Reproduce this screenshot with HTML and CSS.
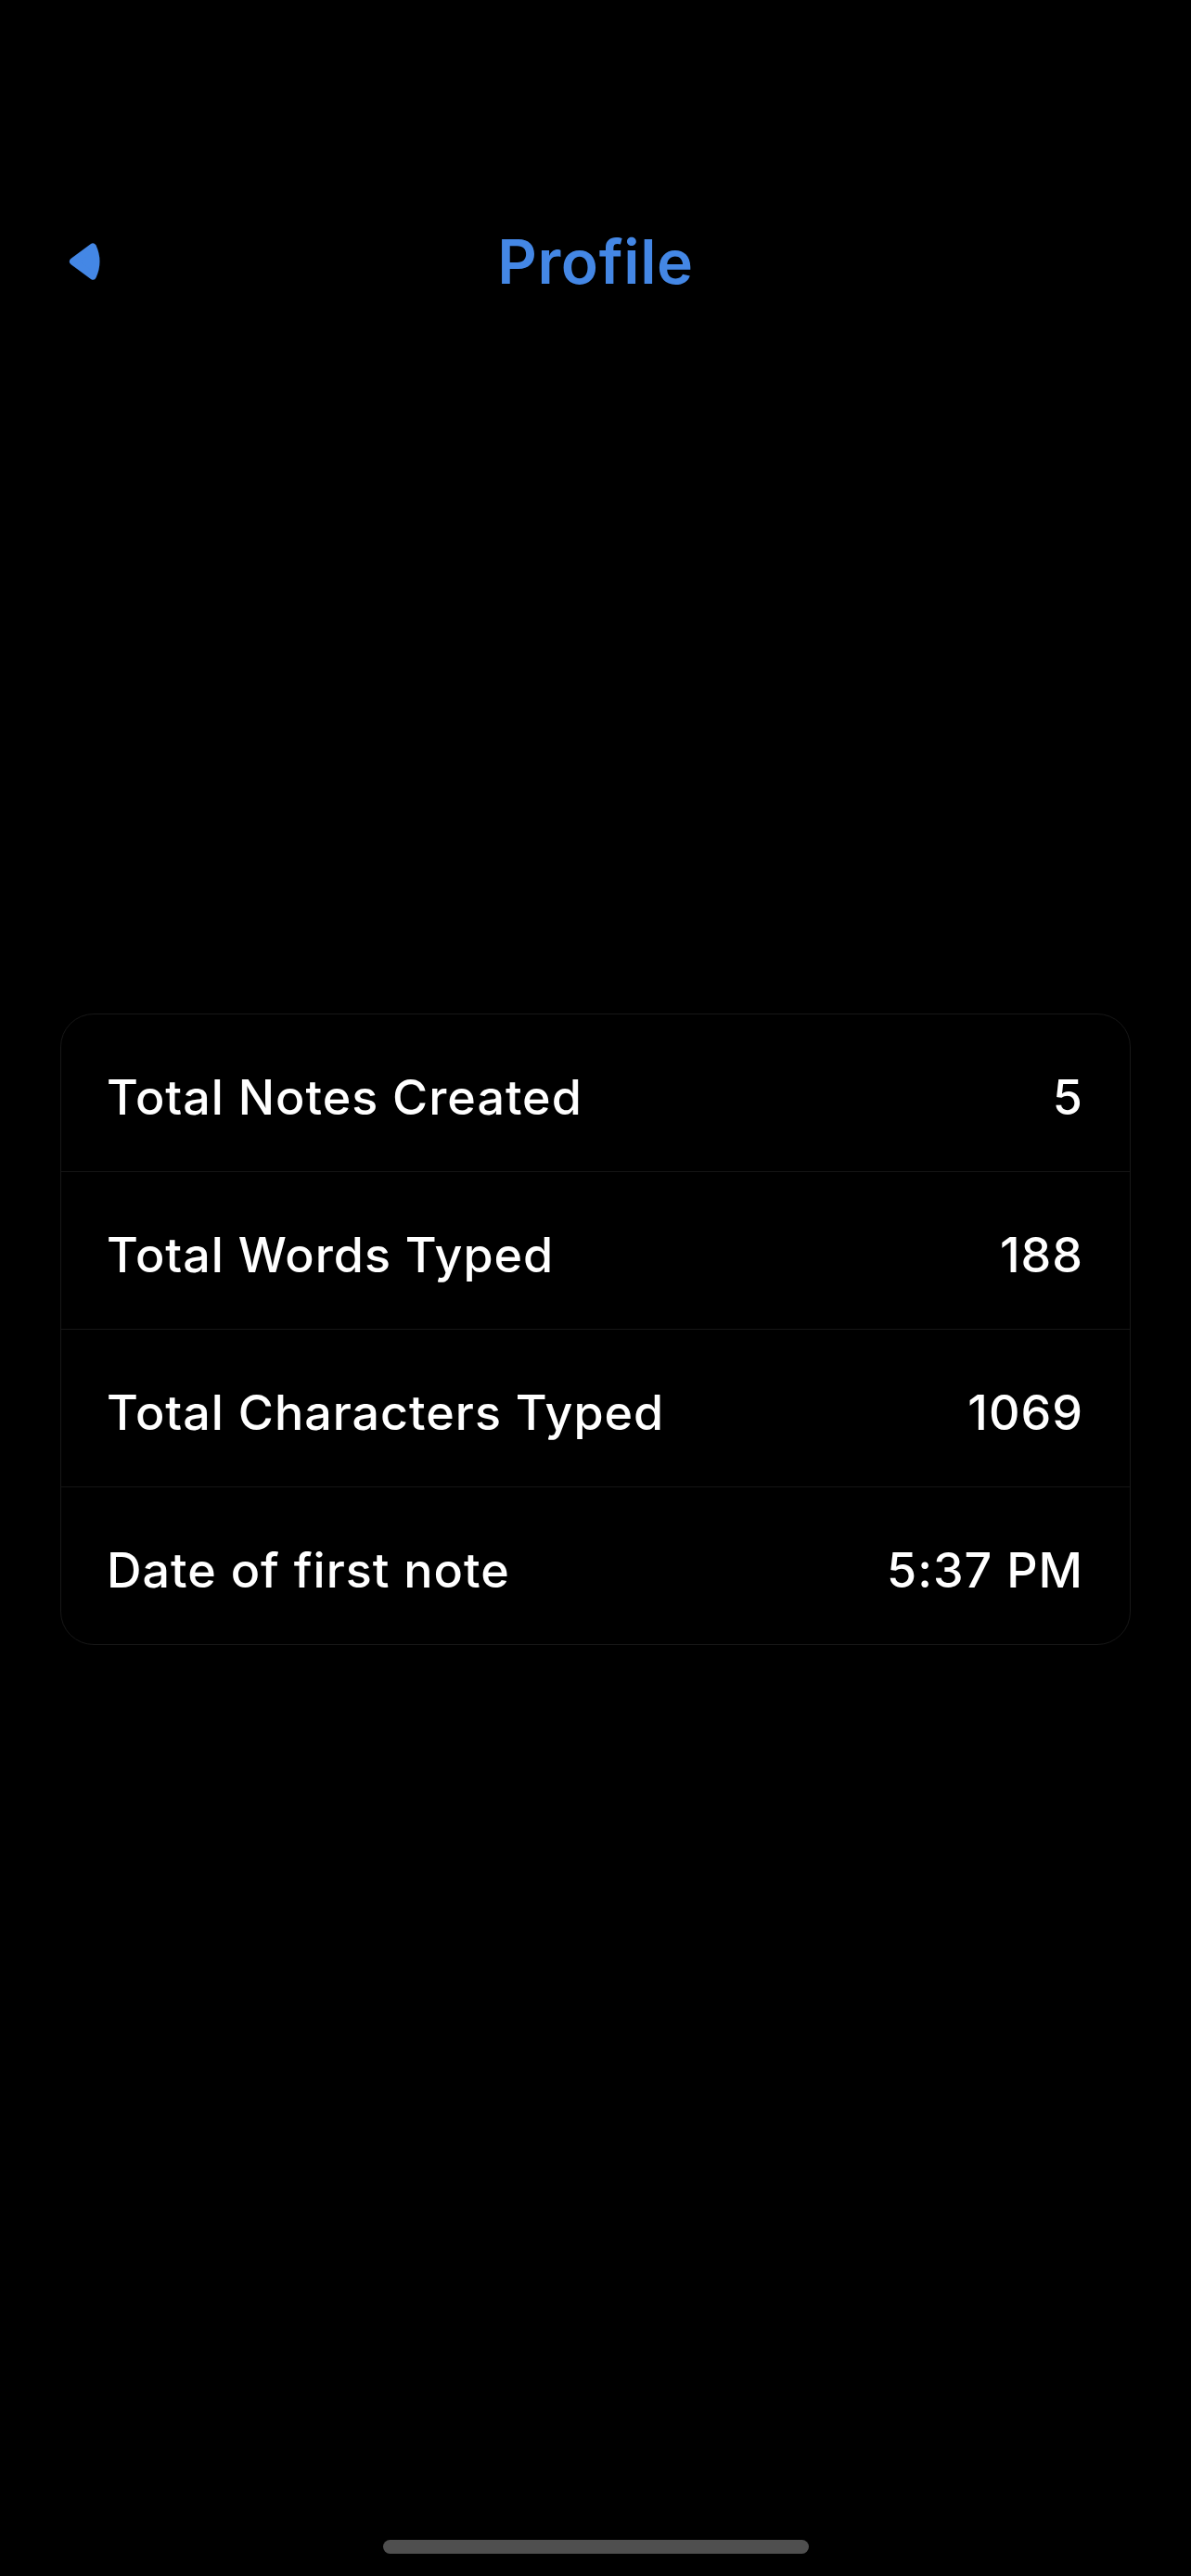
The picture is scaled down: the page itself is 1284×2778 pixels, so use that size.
FILE: index.html
```html
<!DOCTYPE html>
<html lang="en">
<head>
<meta charset="utf-8">
<title>Profile</title>
<link rel="stylesheet" href="styles.css">
</head>
<body>
  <div class="screen">
    <header class="navbar">
      <div class="nav-left">
        <button class="back" aria-label="Back">
          <svg width="38" height="42" viewBox="0 0 38 42">
            <path d="M8 21 L29 5.5 Q36 21 29 36.5 Z" fill="#4487e5" stroke="#4487e5" stroke-width="8" stroke-linejoin="round"/>
          </svg>
        </button>
      </div>
      <h1 class="title">Profile</h1>
      <div class="nav-right"></div>
    </header>

    <section class="card">
      <div class="row"><span class="label">Total Notes Created</span><span class="value">5</span></div>
      <div class="row"><span class="label">Total Words Typed</span><span class="value">188</span></div>
      <div class="row"><span class="label">Total Characters Typed</span><span class="value">1069</span></div>
      <div class="row"><span class="label">Date of first note</span><span class="value">5:37 PM</span></div>
    </section>

    <div class="home-indicator"></div>
  </div>
</body>
</html>
```

FILE: styles.css
```css
html, body {
  margin: 0;
  padding: 0;
  background: #000;
}

body {
  font-family: "Inter", "Roboto", "Liberation Sans", sans-serif;
  color: #fff;
}

.screen {
  display: flex;
  flex-direction: column;
  min-height: 2778px;
}

.navbar {
  display: grid;
  grid-template-columns: 1fr auto 1fr;
  align-items: center;
  height: 100px;
  margin-top: 232px;
}

.nav-left {
  display: flex;
  align-items: center;
  padding-left: 71px;
}

.back {
  display: flex;
  padding: 0;
  margin: 0;
  border: none;
  background: none;
}

.title {
  margin: 0;
  font-size: 66px;
  font-weight: 600;
  line-height: 80px;
  color: #4487e5;
  letter-spacing: 0.6px;
}

.card {
  margin: 761px 65px 0 65px;
  border: 1px solid #171717;
  border-radius: 36px;
  display: flex;
  flex-direction: column;
}

.row {
  display: flex;
  justify-content: space-between;
  padding: 59px 51px 48px 49px;
  border-bottom: 1px solid #151515;
  font-size: 52px;
  font-weight: 500;
  line-height: 62px;
  letter-spacing: 1px;
}

.value {
  margin-right: -1px;
}

.row:last-child {
  border-bottom: none;
}

.home-indicator {
  margin: auto auto 24px auto;
  width: 459px;
  height: 15px;
  border-radius: 8px;
  background: #4f4f4f;
}
```
